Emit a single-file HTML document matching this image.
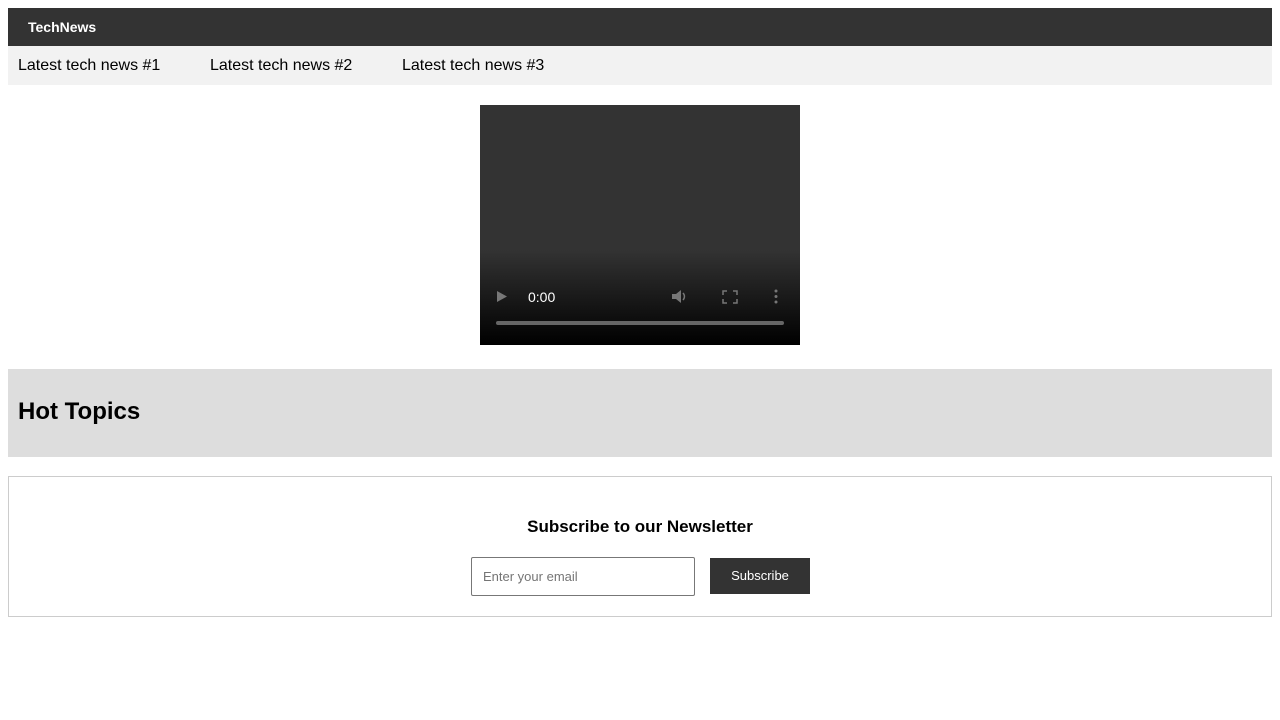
<!DOCTYPE html>
<html><head><style>
body{margin:0;background:#fff;font-family:"Liberation Sans",sans-serif;position:relative;width:1280px;height:720px;overflow:hidden}
.a{position:absolute}
</style></head><body>
<div class="a" style="left:8px;top:8px;width:1264px;height:38px;background:#333;color:#fff;font-weight:bold;font-size:14px;line-height:38px"><span style="margin-left:20px">TechNews</span></div>
<div class="a" style="left:8px;top:46px;width:1264px;height:39px;background:#f2f2f2;font-size:16px;line-height:40px">
<span class="a" style="left:10px">Latest tech news #1</span>
<span class="a" style="left:202px">Latest tech news #2</span>
<span class="a" style="left:394px">Latest tech news #3</span></div>
<div class="a" style="left:480px;top:105px;width:320px;height:240px;background:linear-gradient(#333 0,#333 145px,#000 240px)">
<svg class="a" style="left:0;top:0" width="320" height="240">
<polygon points="17,186 27,191.5 17,197" fill="#777"/>
<text x="48" y="197" fill="#fff" font-family="Liberation Sans" font-size="14">0:00</text>
<polygon points="192,189 196,189 201,185 201,198 196,194 192,194" fill="#777"/>
<path d="M203,188a5,5 0 0 1 0,7" stroke="#777" fill="none" stroke-width="1.5"/>
<path d="M243,190v-4h4M253,186h4v4M257,194v4h-4M247,198h-4v-4" stroke="#777" fill="none" stroke-width="1.5"/>
<circle cx="296" cy="186" r="1.5" fill="#777"/><circle cx="296" cy="191.5" r="1.5" fill="#777"/><circle cx="296" cy="197" r="1.5" fill="#777"/>
<rect x="16" y="216" width="288" height="4" rx="2" fill="#666"/>
</svg></div>
<div class="a" style="left:8px;top:369px;width:1264px;height:88px;background:#ddd"><div class="a" style="left:10px;top:29px;font-size:24px;font-weight:bold">Hot Topics</div></div>
<div class="a" style="left:8px;top:476px;width:1262px;height:139px;border:1px solid #ccc">
<div class="a" style="left:0;width:100%;top:40px;text-align:center;font-size:17px;font-weight:bold">Subscribe to our Newsletter</div>
<div class="a" style="left:462px;top:80px;width:224px;height:39px;border:1px solid #777;border-radius:2px;font-size:13px;color:#757575;line-height:37px;box-sizing:border-box;padding-left:11px">Enter your email</div>
<div class="a" style="left:701px;top:81px;width:100px;height:36px;background:#333;color:#fff;font-size:13px;line-height:36px;text-align:center">Subscribe</div>
</div>
</body></html>
